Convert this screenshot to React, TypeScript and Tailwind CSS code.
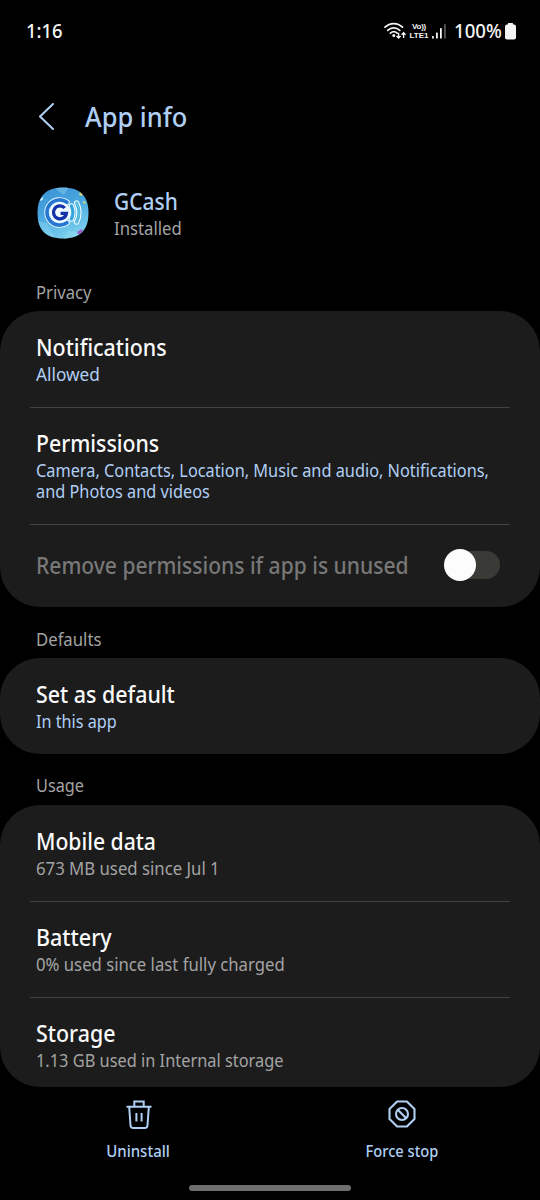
import type { ReactNode } from 'react'

type RowProps = {
  title: string
  summary: string
  className: string
  titleClass: string
  summaryClass: string
}

const Row = ({
  title,
  summary,
  className,
  titleClass,
  summaryClass,
}: RowProps) => (
  <div className={`px-9 ${className}`}>
    <p
      className={`origin-left text-[23px] leading-[30px] font-medium whitespace-nowrap text-[#fafafa] ${titleClass}`}
    >
      {title}
    </p>
    <p
      className={`mt-0.5 origin-left text-[17.5px] leading-[21px] whitespace-pre ${summaryClass}`}
    >
      {summary}
    </p>
  </div>
)

const Divider = () => <div className="mx-[30px] h-px bg-[#424242]" />

const Card = ({ children }: { children: ReactNode }) => (
  <section className="overflow-hidden rounded-[40px] bg-[#1c1c1c]">
    {children}
  </section>
)

const SectionLabel = ({
  className,
  children,
}: {
  className: string
  children: ReactNode
}) => (
  <h2
    className={`ml-9 origin-left text-[17.5px] leading-6 font-normal text-[#a3a3a3] ${className}`}
  >
    {children}
  </h2>
)

const WifiIcon = () => (
  <svg width="23" height="18" viewBox="0 0 23 18" fill="none">
    <g stroke="#f5f5f5" strokeWidth="1.7" strokeLinecap="round">
      <path d="M1 5.2C6 .3 13.5.3 18.5 5.2" />
      <path d="M3.7 8.3c3.5-3.3 8.6-3.3 12.1 0" />
      <path d="M6.4 11.2c2-1.8 4.8-1.8 6.8 0" />
    </g>
    <circle cx="9.8" cy="13.6" r="1.5" fill="#f5f5f5" />
    <path
      d="M14.6 10.7v5.3m-2-2 2 2 2-2M19.6 16v-5.3m-2 2 2-2 2 2"
      stroke="#f5f5f5"
      strokeWidth="1.4"
    />
  </svg>
)

const SignalIcon = () => (
  <svg width="15" height="15" viewBox="0 0 15 15" fill="#f5f5f5">
    <rect x="0" y="12" width="1.8" height="2.5" rx=".6" />
    <rect x="4" y="8.5" width="1.8" height="6" rx=".6" />
    <rect x="8" y="4" width="1.8" height="10.5" rx=".6" />
    <rect x="12" y="0" width="1.8" height="14.5" rx=".6" opacity=".35" />
  </svg>
)

const BatteryIcon = () => (
  <svg width="11" height="17" viewBox="0 0 11 17" fill="#f5f5f5">
    <rect x="2.8" y="0" width="5.4" height="4" rx="1" />
    <rect x="0" y="1.4" width="11" height="15.2" rx="2" />
  </svg>
)

const StatusBar = () => (
  <header className="flex h-[60px] items-center pt-0.5 pr-6 pl-[26px] text-[#f5f5f5]">
    <span className="origin-left scale-x-[.92] text-[20px] leading-6 font-medium">
      1:16
    </span>
    <div className="ml-auto flex items-center">
      <WifiIcon />
      <div className="ml-0.5 flex w-5 flex-col items-center font-['Liberation_Sans',sans-serif] text-[8px] leading-[9px] font-bold whitespace-nowrap">
        <p className="tracking-[-0.3px]">Vo))</p>
        <p>LTE1</p>
      </div>
      <div className="ml-[3px]">
        <SignalIcon />
      </div>
      <span className="ml-[7px] w-12 origin-left scale-x-[.93] text-[20px] leading-6 font-medium">
        100%
      </span>
      <div className="ml-[3px]">
        <BatteryIcon />
      </div>
    </div>
  </header>
)

const GCashLogo = () => (
  <svg width="52" height="52" viewBox="0 0 52 52" fill="none">
    <defs>
      <linearGradient id="sky" x1="0" y1="0" x2=".4" y2="1">
        <stop offset="0" stopColor="#3a8fd0" />
        <stop offset=".5" stopColor="#48a6e0" />
        <stop offset="1" stopColor="#78cdec" />
      </linearGradient>
      <clipPath id="squircle">
        <path d="M26 .5C43 .5 51.5 9 51.5 26S43 51.5 26 51.5.5 43 .5 26 9 .5 26 .5Z" />
      </clipPath>
    </defs>
    <g clipPath="url(#squircle)">
      <path fill="url(#sky)" d="M0 0h52v52H0z" />
      <path d="M0 34l10 2 8 16H2Z" fill="#8fdcf3" opacity=".4" />
      <path d="M16 0h16l-5 8Z" fill="#a6e4f5" opacity=".35" />
      <path d="m26 52 5-8 11 1-2 7Z" fill="#8fdcf3" opacity=".5" />
      <path d="m43 5 3 1-1 3-3-1Z" fill="#dcd566" />
      <path d="m46 14 3 1-1 2-2-1Z" fill="#c4d884" />
      <path d="m3 13 3-3v2l-2 2Z" fill="#e8fbff" />
      <path d="m40 45 5-3 1 4-4 2Z" fill="#a15cc4" />
      <g strokeLinecap="round">
        <g stroke="#eefaff" strokeWidth="5.4">
          <path d="M30 15.3a12.6 12.6 0 1 0 0 20.4" />
          <path d="M34.4 19q3 6.5 0 13M39.6 16q4.8 9.5 0 19" />
        </g>
        <circle cx="23" cy="25.5" r="10.6" fill="#eefaff" />
        <path
          d="M30 15.3a12.6 12.6 0 1 0 0 20.4"
          stroke="#2577d2"
          strokeWidth="3.6"
        />
        <path d="M34.4 19q3 6.5 0 13" stroke="#35a3dc" strokeWidth="3.2" />
        <path d="M39.6 16q4.8 9.5 0 19" stroke="#55b9e0" strokeWidth="3.2" />
      </g>
      <path
        d="M27.8 21A6.5 6.5 0 1 0 29.4 26.4H23.6"
        stroke="#1433a8"
        strokeWidth="3.3"
      />
    </g>
  </svg>
)

const TrashIcon = () => (
  <svg
    width="26"
    height="30"
    viewBox="0 0 26 30"
    fill="none"
    stroke="#b0cff4"
    strokeWidth="2"
  >
    <path d="M.5 6.7h25M8.3 6.5V1.4h9.4v5.1" />
    <path d="M3.2 7l1.3 18.2c.1 1.9 1 2.8 2.8 2.8h11.4c1.8 0 2.7-.9 2.8-2.8L22.8 7" />
    <path d="M10.4 13v8.6M15.6 13v8.6" />
  </svg>
)

const StopIcon = () => (
  <svg
    width="28"
    height="28"
    viewBox="0 0 28 28"
    fill="none"
    stroke="#b0cff4"
    strokeWidth="2.1"
  >
    <path
      d="M9.1 1.5h9.8l7.6 7.6v9.8l-7.6 7.6H9.1l-7.6-7.6V9.1Z"
      strokeLinejoin="round"
    />
    <circle cx="14" cy="14" r="6" />
    <path d="m9.8 9.8 8.4 8.4" />
  </svg>
)

const App = () => (
  <div className="flex h-[1200px] w-[540px] flex-col overflow-hidden bg-black font-['Noto_Sans',sans-serif]">
    <StatusBar />

    <div className="flex h-[113px] items-center pl-[38px]">
      <svg width="18" height="28" viewBox="0 0 18 28" fill="none">
        <path
          d="M15 1 2 13.5 15 26"
          stroke="#b0cff4"
          strokeWidth="2"
          strokeLinecap="round"
          strokeLinejoin="round"
        />
      </svg>
      <h1 className="ml-[29px] origin-left scale-x-[.925] text-[27.5px] leading-9 font-medium text-[#b0cff4]">
        App info
      </h1>
    </div>

    <div className="flex h-[107px] pt-[13px] pl-[37px]">
      <div className="pt-px">
        <GCashLogo />
      </div>
      <div className="ml-[25px]">
        <p className="origin-left scale-x-[.91] text-[23px] leading-[30px] font-medium text-[#b0cff4]">
          GCash
        </p>
        <p className="origin-left scale-x-[.955] text-[17.5px] leading-6 text-[#a3a3a3]">
          Installed
        </p>
      </div>
    </div>

    <SectionLabel className="mb-[7px] scale-x-[.95]">Privacy</SectionLabel>
    <Card>
      <Row
        title="Notifications"
        summary="Allowed"
        className="h-24 pt-[21px]"
        titleClass="scale-x-[.93]"
        summaryClass="scale-x-[.985] text-[#b0cff4]"
      />
      <Divider />
      <Row
        title="Permissions"
        summary={
          'Camera, Contacts, Location, Music and audio, Notifications,\nand Photos and videos'
        }
        className="h-[116px] pt-5"
        titleClass="scale-x-[.925]"
        summaryClass="scale-x-[.931] text-[#b0cff4]"
      />
      <Divider />
      <div className="flex h-[82px] items-center justify-between pr-10 pb-0.5 pl-9">
        <p className="w-[372px] origin-left scale-x-[.915] text-[23px] leading-[30px] font-medium whitespace-nowrap text-[#787878]">
          Remove permissions if app is unused
        </p>
        <button
          role="switch"
          aria-checked="false"
          className="flex h-7 w-[55px] items-center rounded-full bg-[#3a3a37]"
        >
          <span className="-ml-px size-8 shrink-0 rounded-full bg-[#fcfcfc]" />
        </button>
      </div>
    </Card>

    <SectionLabel className="mt-5 mb-[7px] scale-x-[.955]">
      Defaults
    </SectionLabel>
    <Card>
      <Row
        title="Set as default"
        summary="In this app"
        className="h-24 pt-[21px]"
        titleClass="scale-x-[.93]"
        summaryClass="scale-x-[.925] text-[#b0cff4]"
      />
    </Card>

    <SectionLabel className="mt-[19px] mb-2 scale-x-[.93]">Usage</SectionLabel>
    <Card>
      <Row
        title="Mobile data"
        summary="673 MB used since Jul 1"
        className="h-24 pt-[21px]"
        titleClass="scale-x-[.92]"
        summaryClass="scale-x-[.957] text-[#a3a3a3]"
      />
      <Divider />
      <Row
        title="Battery"
        summary="0% used since last fully charged"
        className="h-[95px] pt-5"
        titleClass="scale-x-[.935]"
        summaryClass="scale-x-[.955] text-[#a3a3a3]"
      />
      <Divider />
      <Row
        title="Storage"
        summary="1.13 GB used in Internal storage"
        className="h-[89px] pt-5"
        titleClass="scale-x-[.93]"
        summaryClass="scale-x-[.935] text-[#a3a3a3]"
      />
    </Card>

    <nav className="flex h-[98px] justify-between px-[7px] pt-[13px] text-[16.5px] leading-6 font-medium text-[#b0cff4]">
      <button className="flex w-[263px] flex-col items-center">
        <span className="flex h-[39px]">
          <TrashIcon />
        </span>
        <span className="scale-x-[.91]">Uninstall</span>
      </button>
      <button className="flex w-[263px] flex-col items-center">
        <span className="flex h-[39px]">
          <StopIcon />
        </span>
        <span className="scale-x-[.89]">Force stop</span>
      </button>
    </nav>
    <div className="mx-auto h-[6px] w-[162px] rounded-full bg-[#6f6f6f]" />
  </div>
)

export default App
